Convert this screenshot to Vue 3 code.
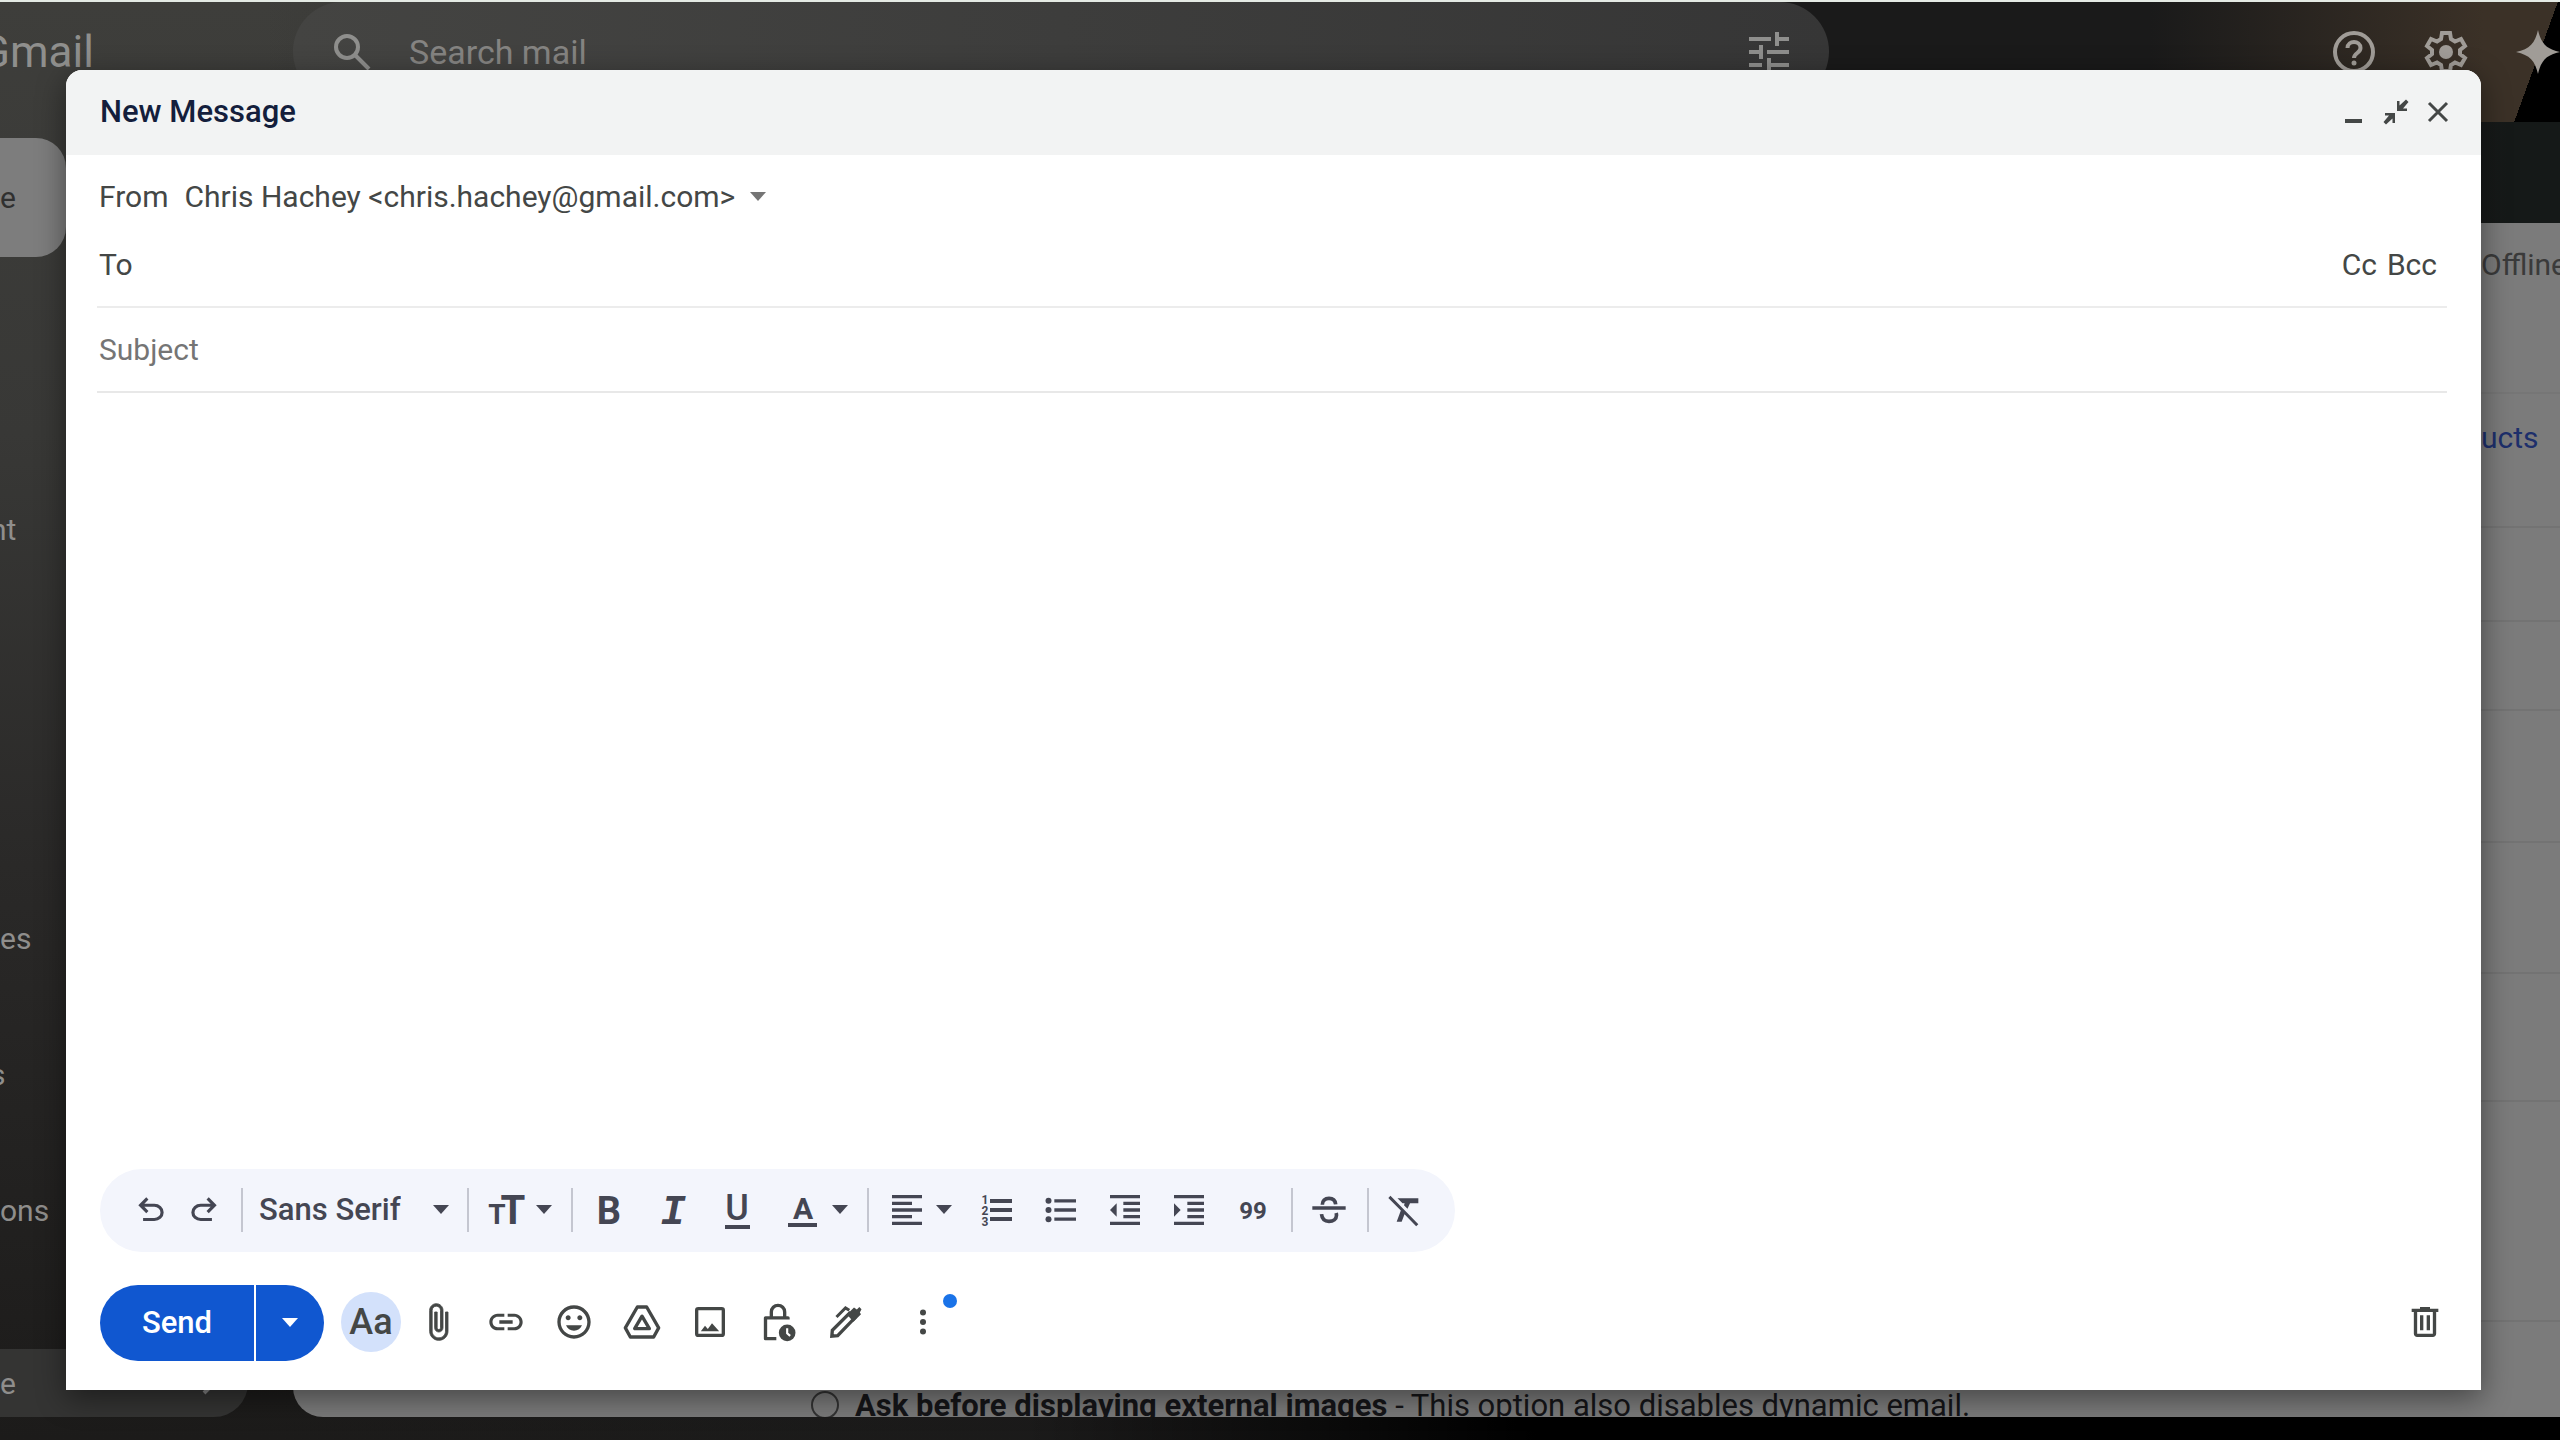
<!-- * {Script} part of code -->
<script setup>
import { ref } from 'vue'

const to = ref('')
const subject = ref('')
const body = ref('')
const from = ref('Chris Hachey <chris.hachey@gmail.com>')
const font = ref('Sans Serif')
const showFormatting = ref(true)

const folders = [
  { name: 'nt', size: 'h-first tucked' },
  { name: 'es', size: 'h-far' },
  { name: 's', size: 'h-near tucked' },
  { name: 'ons', size: 'h-near' },
]

// heights of the settings sections behind the dialog
const sections = [94, 89, 132, 131, 128, 220]

const icons = {
  undo: '<path d="M7 19v-2h7.1q1.575 0 2.738-1T18 13.5 16.838 11 14.1 10H7.8l2.6 2.6L9 14 4 9l5-5 1.4 1.4L7.8 8h6.3q2.425 0 4.163 1.575T20 13.5t-1.737 3.925T14.1 19H7z"/>',
  redo: '<path d="M9.9 19q-2.425 0-4.163-1.575T4 13.5t1.737-3.925T9.9 8h6.3l-2.6-2.6L15 4l5 5-5 5-1.4-1.4 2.6-2.6H9.9q-1.575 0-2.738 1T6 13.5 7.162 16 9.9 17H17v2H9.9z"/>',
  align: '<path d="M15 15H3v2h12v-2zm0-8H3v2h12V7zM3 13h18v-2H3v2zm0 8h18v-2H3v2zM3 3v2h18V3H3z"/>',
  outdent: '<path d="M11 17h10v-2H11v2zm-8-5l4 4V8l-4 4zm0 9h18v-2H3v2zM3 3v2h18V3H3zm8 6h10V7H11v2zm0 4h10v-2H11v2z"/>',
  indent: '<path d="M3 21h18v-2H3v2zM3 8v8l4-4-4-4zm8 9h10v-2H11v2zM3 3v2h18V3H3zm8 6h10V7H11v2zm0 4h10v-2H11v2z"/>',
  bullets: '<circle cx="4.5" cy="6.5" r="1.8"/><circle cx="4.5" cy="12" r="1.8"/><circle cx="4.5" cy="17.5" r="1.8"/><path d="M8 5.5h13v2H8zM8 11h13v2H8zM8 16.5h13v2H8z"/>',
  strike: '<path d="M2 9.8h20v2H2z"/><path d="M8 8.8C8 6.5 9.5 5 12 5s3.8 1.4 4 3.6M7.5 14.5c.3 2.9 2 4.3 4.500 4.3s4.5-1.3 4.5-3.6c0-.5-.1-1-.2-1.4" fill="none" stroke="currentColor" stroke-width="2.2"/>',
  clear: '<path d="M3.270 3.500L2 4.800l7.500 7.500L7 19h3l1.700-4.400L18.700 21.800 20 20.500 4 4.200zM7.500 5l3 3h1.300l-.4 1.200 2.100 2.100L15 8h5V5z"/>',
  attach: '<path d="M16.5 6v11.5c0 2.210-1.790 4-4 4s-4-1.790-4-4V5c0-1.380 1.120-2.500 2.500-2.500s2.500 1.120 2.500 2.500v10.500c0 .55-.45 1-1 1s-1-.45-1-1V6H10v9.500c0 1.380 1.120 2.500 2.500 2.500s2.500-1.120 2.500-2.500V5c0-2.210-1.790-4-4-4S7 2.790 7 5v12.500c0 3.040 2.460 5.500 5.500 5.500s5.500-2.460 5.500-5.500V6h-1.500z" stroke="currentColor" stroke-width=".5"/>',
  link: '<path d="M3.900 12c0-1.710 1.390-3.100 3.100-3.100h4V7H7c-2.760 0-5 2.240-5 5s2.240 5 5 5h4v-1.900H7c-1.710 0-3.100-1.390-3.100-3.100zM8 13h8v-2H8v2zm9-6h-4v1.900h4c1.710 0 3.100 1.390 3.100 3.100s-1.390 3.100-3.100 3.100h-4V17h4c2.760 0 5-2.240 5-5s-2.240-5-5-5z"/>',
  emoji: '<path d="M11.990 2C6.470 2 2 6.480 2 12s4.470 10 9.990 10C17.520 22 22 17.520 22 12S17.520 2 11.990 2zM12 20c-4.420 0-8-3.580-8-8s3.580-8 8-8 8 3.580 8 8-3.580 8-8 8zm3.500-9c.830 0 1.500-.670 1.500-1.500S16.330 8 15.500 8 14 8.670 14 9.500s.670 1.500 1.500 1.500zm-7 0c.830 0 1.500-.670 1.500-1.500S9.330 8 8.500 8 7 8.670 7 9.500 7.670 11 8.500 11zM7.200 14h9.600c-.8 2-2.600 3.200-4.800 3.200S8 16 7.200 14z"/>',
  drive: '<g fill="none" stroke="currentColor" stroke-width="2" stroke-linejoin="round"><path d="M9.200 3h5.600L22 15.500 19 21H5l-3-5.500z"/><path d="M12 8.500L7.600 16h8.800z"/></g>',
  image: '<rect x="4" y="4" width="16" height="16" rx="1" fill="none" stroke="currentColor" stroke-width="2"/><path d="M6.500 17.500l2.500-3.300 1.700 2 2.500-3.500 4.300 4.800z"/>',
  lock: '<path d="M18 10.500V9.500H4.500V22H11M8 9V6a4 4 0 0 1 8 0V9" fill="none" stroke="currentColor" stroke-width="2" stroke-linejoin="round"/><circle cx="17.500" cy="18.500" r="5"/><path d="M17.500 15.800v3l1.800 1.500" fill="none" stroke="#fff" stroke-width="1.300"/>',
  pen: '<path d="M3.500 20.500l.3-3.500L14 6.800l3 3L7 20.200z" fill="none" stroke="currentColor" stroke-width="2"/><path d="M12.500 7.500l4.300-4.200 1.700 1.200L20 3l1.300 1.300-1 2 .7 1-4.500 4.500z"/><path d="M6.300 9l5.400-5.400 2.300 1.400" fill="none" stroke="currentColor" stroke-width="1.800"/>',
  more: '<circle cx="12" cy="6.300" r="1.800"/><circle cx="12" cy="12" r="1.800"/><circle cx="12" cy="17.700" r="1.800"/>',
  trash: '<path d="M15 4V3H9v1H4v2h1.300v13c0 1.100.9 2 2 2h9.400c1.100 0 2-.9 2-2V6H20V4H15zM7.300 19V6h9.400v13H7.300z"/><path d="M9 8h2v9H9zM13 8h2v9h-2z"/>',
}

const listTools = [
  { name: 'bullets', label: 'Bulleted list' },
  { name: 'outdent', label: 'Indent less' },
  { name: 'indent', label: 'Indent more' },
]

const actions = [
  { name: 'attach', label: 'Attach files' },
  { name: 'link', label: 'Insert link' },
  { name: 'emoji', label: 'Insert emoji' },
  { name: 'drive', label: 'Insert files using Drive' },
  { name: 'image', label: 'Insert photo' },
  { name: 'lock', label: 'Toggle confidential mode' },
  { name: 'pen', label: 'Insert signature' },
]

const discard = () => {
  to.value = ''
  subject.value = ''
  body.value = ''
}
</script>

<!-- * Template {Html} part of code -->
<template>
  <div class="screen">
    <!-- mailbox behind the dialog -->
    <div class="mailbox">
      <header class="topbar">
        <span class="brand">Gmail</span>
        <div class="searchbar">
          <svg class="icon-search" viewBox="0 0 38 38"><circle cx="14" cy="14" r="11" /><path d="M22 22l14 14" /></svg>
          <span>Search mail</span>
          <svg class="icon-tune" viewBox="0 0 40 40"><path d="M0 7h22M29 7h11M28 0v14M0 20h11M18 20h22M12 13v14M0 33h13M20 33h20M20 26v14" /></svg>
        </div>
        <div class="top-icons">
          <svg viewBox="0 0 44 44"><circle cx="22" cy="22" r="19" class="line" /><path class="line" d="M15.500 18c0-8 13-8 13 0 0 5-6.500 5-6.500 10" /><circle cx="22" cy="33" r="2.500" /></svg>
          <svg viewBox="0 0 44 44"><path class="line" d="M18 3h8l1 6 4 2.500 6-2.500 4 7-5 4v4l5 4-4 7-6-2.500-4 2.500-1 6h-8l-1-6-4-2.500-6 2.500-4-7 5-4v-4l-5-4 4-7 6 2.500 4-2.500z" /><circle cx="22" cy="22" r="7" /></svg>
          <svg viewBox="0 0 44 44"><path d="M22 0c3 13 8 19 22 22-14 3-19 9-22 22-3-13-8-19-22-22C14 19 19 13 22 0z" /></svg>
        </div>
      </header>

      <div class="mail-main">
        <nav class="sidebar">
          <div class="compose-pill">e</div>
          <div v-for="folder in folders" :key="folder.name" class="folder" :class="folder.size">{{ folder.name }}</div>
          <div class="folder-active">
            <span>e</span>
            <svg viewBox="0 0 16 24"><path d="M2 2l10 10L2 22" /></svg>
          </div>
        </nav>

        <main class="settings">
          <div class="settings-panel">
            <div class="side-strip">
              <div class="tab">Offline</div>
              <div class="section-link"><a href="#">ucts</a></div>
              <div v-for="(height, i) in sections" :key="i" class="section" :style="{ height: height + 'px' }"></div>
            </div>
            <label class="option">
              <input type="radio" name="images" />
              <span><b>Ask before displaying external images</b> - This option also disables dynamic email.</span>
            </label>
          </div>
        </main>
      </div>
    </div>

    <!-- compose dialog -->
    <section class="dialog" role="dialog" aria-labelledby="dialog-title">
      <header class="dialog-header">
        <h1 id="dialog-title">New Message</h1>
        <div class="window-buttons">
          <button type="button" aria-label="Minimize"><svg viewBox="0 0 26 26"><path d="M4 20h17v4H4z" /></svg></button>
          <button type="button" aria-label="Exit full screen"><svg viewBox="0 0 26 26"><path d="M14 2v10h10v-2.500h-4L25.500 3 23 .5l-6.500 6V2zM12 24V14H2v2.500h4L.5 23 3 25.500l6.500-6V24z" /></svg></button>
          <button type="button" aria-label="Close"><svg viewBox="0 0 26 26"><path class="line" d="M4 4l18 18M22 4L4 22" /></svg></button>
        </div>
      </header>

      <form class="fields" @submit.prevent>
        <div class="row-from">
          <label for="from">From</label>
          <select id="from" v-model="from">
            <option>Chris Hachey &lt;chris.hachey@gmail.com&gt;</option>
          </select>
          <i class="arrow small"></i>
        </div>
        <div class="row-to">
          <label for="to">To</label>
          <input id="to" v-model="to" type="text" />
          <button type="button">Cc</button>
          <button type="button">Bcc</button>
        </div>
        <input v-model="subject" class="row-subject" type="text" placeholder="Subject" aria-label="Subject" />
        <textarea v-model="body" class="message" aria-label="Message body"></textarea>
      </form>

      <div v-if="showFormatting" class="toolbar">
        <button type="button" class="history" aria-label="Undo"><svg viewBox="0 0 24 24" v-html="icons.undo"></svg></button>
        <button type="button" class="history" aria-label="Redo"><svg viewBox="0 0 24 24" v-html="icons.redo"></svg></button>
        <div class="group font-group">
          <select v-model="font" aria-label="Font">
            <option>Sans Serif</option>
          </select>
          <i class="arrow"></i>
        </div>
        <div class="group">
          <button type="button" class="drop" aria-label="Size">
            <svg viewBox="0 0 40 40"><text x="10" y="34" font-size="28">T</text><text x="26" y="34" font-size="40">T</text></svg>
            <i class="arrow"></i>
          </button>
        </div>
        <div class="group">
          <button type="button" class="tool" aria-label="Bold"><svg viewBox="0 0 40 40"><text x="20" y="34" font-size="38">B</text></svg></button>
          <button type="button" class="tool" aria-label="Italic"><svg viewBox="0 0 40 40"><text class="slab" x="20" y="34" font-size="42">I</text></svg></button>
          <button type="button" class="tool" aria-label="Underline"><svg viewBox="0 0 40 40"><text class="medium" x="20" y="30" font-size="36">U</text><path d="M8 35h25v4H8z" /></svg></button>
          <button type="button" class="drop" aria-label="Text color">
            <svg viewBox="0 0 40 40"><text x="20" y="29" font-size="30">A</text><path d="M5 33h29v4H5z" /></svg>
            <i class="arrow"></i>
          </button>
        </div>
        <div class="group">
          <button type="button" class="drop" aria-label="Align">
            <svg viewBox="0 0 24 24" v-html="icons.align"></svg>
            <i class="arrow"></i>
          </button>
          <button type="button" class="tool" aria-label="Numbered list">
            <svg viewBox="0 0 40 40">
              <text x="8" y="14" font-size="12">1</text><text x="8" y="25" font-size="12">2</text><text x="8" y="36" font-size="12">3</text>
              <path d="M13 9h22v4H13zM13 18h22v4H13zM13 27h22v4H13z" />
            </svg>
          </button>
          <button v-for="tool in listTools" :key="tool.name" type="button" class="tool" :aria-label="tool.label"><svg viewBox="0 0 24 24" v-html="icons[tool.name]"></svg></button>
          <button type="button" class="tool" aria-label="Quote"><svg viewBox="0 0 40 40"><text x="20" y="29" font-size="24">99</text></svg></button>
        </div>
        <div class="group">
          <button type="button" class="tool" aria-label="Strikethrough"><svg viewBox="0 0 24 24" v-html="icons.strike"></svg></button>
        </div>
        <div class="group">
          <button type="button" class="tool" aria-label="Remove formatting"><svg viewBox="0 0 24 24" v-html="icons.clear"></svg></button>
        </div>
      </div>

      <footer class="actions">
        <div class="send">
          <button type="button" class="send-main">Send</button>
          <button type="button" class="send-more" aria-label="More send options"><i class="arrow"></i></button>
        </div>
        <button type="button" class="formatting" aria-label="Formatting options" @click="showFormatting = !showFormatting">Aa</button>
        <button v-for="action in actions" :key="action.name" type="button" class="action" :aria-label="action.label"><svg viewBox="0 0 24 24" v-html="icons[action.name]"></svg></button>
        <button type="button" class="action more" aria-label="More options"><svg viewBox="0 0 24 24" v-html="icons.more"></svg></button>
        <button type="button" class="action discard" aria-label="Discard draft" @click="discard"><svg viewBox="0 0 24 24" v-html="icons.trash"></svg></button>
      </footer>
    </section>
  </div>
</template>

<!-- * {CSS} part of code -->
<style>
body{
  margin: 0;
  background: #0c0c0c;
}
</style>

<style scoped>
*{
  box-sizing: border-box;
}

.screen{
  display: grid;
  height: 100vh;
  overflow: hidden;
  font-family: Roboto, "Open Sans", sans-serif;
  font-size: 30px;
  color: #444746;
}

button,
input,
select,
textarea{
  font: inherit;
  color: inherit;
  background: none;
  border: none;
  padding: 0;
  margin: 0;
  outline: none;
}

button{
  cursor: pointer;
}

/* Mailbox */
.mailbox{
  grid-area: 1 / 1;
  display: flex;
  flex-direction: column;
  min-width: 0;
  min-height: 0;
  overflow: hidden;
  border-top: 2px solid #e4eae4;
  background:
    linear-gradient(110deg, transparent 72%, #000 72%) top right / 120px 120px no-repeat,
    linear-gradient(90deg, transparent 84%, #3b3127 97%) top / 100% 120px no-repeat,
    linear-gradient(90deg, transparent 96%, #151918 98%) 0 120px / 100% 104px no-repeat,
    linear-gradient(90deg, transparent 40%, #000 60%) bottom / 100% 24px no-repeat,
    linear-gradient(90deg, transparent 10%, #1a1a1a 70%),
    linear-gradient(#3e3e3b, #383836 30%, #2a2928 60%, #1c1b1a);
}

.topbar{
  flex: none;
  display: flex;
  align-items: center;
  height: 101px;
  padding-bottom: 2px;
  color: #858482;
}

.brand{
  width: 313px;
  margin-left: -20px;
  font-size: 44px;
  color: #8f8f8d;
}

.searchbar{
  flex: none;
  display: flex;
  align-items: center;
  width: 60%;
  height: 99px;
  padding: 0 40px;
  border-radius: 50px;
  font-size: 34px;
  background: linear-gradient(90deg, #444442, #363636);
}

.icon-search,
.icon-tune{
  fill: none;
  stroke: #8f8f8d;
  stroke-width: 4;
}

.icon-search{
  width: 38px;
  margin-right: 38px;
}

.icon-tune{
  width: 40px;
  margin-left: auto;
}

.top-icons{
  display: flex;
  gap: 48px;
  margin-left: auto;
}

.top-icons svg{
  width: 44px;
  fill: #a09c97;
}

.top-icons .line{
  fill: none;
  stroke: #a09c97;
  stroke-width: 4;
}

.mail-main{
  flex: 1;
  display: flex;
  min-height: 0;
}

.sidebar{
  flex: none;
  display: flex;
  flex-direction: column;
  width: 293px;
  padding: 35px 45px 23px 0;
  color: #8f8e8c;
}

.compose-pill{
  display: flex;
  align-items: center;
  width: 66px;
  height: 119px;
  border-radius: 0 30px 30px 0;
  background: #7d7d7d;
  color: #303030;
}

.folder{
  display: flex;
  align-items: flex-end;
}

.tucked{
  margin-left: -10px;
}

.h-first{
  height: 290px;
}

.h-far{
  height: 409px;
}

.h-near{
  height: 136px;
}

.folder-active{
  display: flex;
  align-items: center;
  justify-content: space-between;
  height: 68px;
  margin-top: auto;
  padding-right: 30px;
  border-radius: 0 0 34px 0;
  background: #343433;
}

.folder-active svg{
  width: 16px;
  fill: none;
  stroke: #858585;
  stroke-width: 4;
}

.settings{
  flex: 1;
  min-width: 0;
  padding: 120px 0 23px;
}

.settings-panel{
  display: flex;
  flex-direction: column;
  justify-content: space-between;
  height: 100%;
  overflow: hidden;
  border-radius: 0 0 0 30px;
  background: #7b7b7b;
}

.side-strip{
  flex: 1;
  align-self: flex-end;
  width: 79px;
  min-height: 0;
  overflow: hidden;
  color: #3a3a3a;
}

.tab{
  height: 171px;
  border-bottom: 2px solid #767676;
  line-height: 84px;
}

.section-link{
  height: 134px;
  border-bottom: 2px solid #737373;
  line-height: 88px;
}

.side-strip a{
  color: #1d2f6b;
  text-decoration: none;
}

.section{
  border-bottom: 2px solid #737373;
}

.option{
  flex: none;
  display: flex;
  align-items: center;
  gap: 16px;
  height: 24px;
  padding-left: 518px;
  font-size: 31px;
  color: #151518;
}

.option input{
  appearance: none;
  width: 28px;
  height: 28px;
  border: 2px solid #333;
  border-radius: 50%;
}

/* Dialog */
.dialog{
  grid-area: 1 / 1;
  display: flex;
  flex-direction: column;
  min-width: 0;
  margin: 70px 79px 50px 66px;
  border-radius: 16px 16px 0 0;
  background: #fff;
  box-shadow: 0 8px 30px rgba(0, 0, 0, 0.45);
  z-index: 1;
}

.dialog-header{
  display: flex;
  align-items: center;
  justify-content: space-between;
  height: 85px;
  padding: 0 30px 2px 34px;
  border-radius: 16px 16px 0 0;
  background: #f2f3f3;
}

.dialog-header h1{
  margin: 0;
  font-size: 31px;
  font-weight: 500;
  color: #141e3c;
}

.window-buttons{
  display: flex;
  gap: 16px;
}

.window-buttons button,
.window-buttons svg{
  display: block;
  width: 26px;
  height: 26px;
  fill: #444746;
}

.window-buttons .line{
  stroke: #444746;
  stroke-width: 3;
}

.fields{
  flex: 1;
  display: flex;
  flex-direction: column;
  min-height: 0;
  padding: 0 34px 0 31px;
}

.row-from,
.row-to{
  display: flex;
  align-items: center;
  padding-left: 2px;
}

.row-from{
  height: 85px;
  padding-bottom: 2px;
}

.row-from label{
  margin-right: 16px;
}

select{
  appearance: none;
  cursor: pointer;
}

.row-to{
  height: 68px;
  padding-bottom: 18px;
  padding-right: 10px;
  border-bottom: 2px solid #ececec;
}

.row-to input{
  flex: 1;
  min-width: 0;
}

.row-to button{
  margin-left: 10px;
}

.row-subject{
  height: 85px;
  padding-left: 2px;
  border-bottom: 2px solid #e8e8e8;
}

.row-subject::placeholder{
  color: #757575;
  opacity: 1;
}

.message{
  flex: 1;
  min-height: 0;
  padding: 20px 2px;
  resize: none;
}

.arrow{
  width: 0;
  height: 0;
  border: 8px solid transparent;
  border-top: 9px solid currentColor;
  border-bottom: none;
}

.arrow.small{
  margin-left: 14px;
  color: #757575;
}

/* Formatting toolbar */
.toolbar{
  align-self: flex-start;
  display: flex;
  align-items: center;
  height: 83px;
  margin-left: 34px;
  padding: 0 18px 2px 24px;
  border-radius: 42px;
  background: #f3f5fc;
  color: #444653;
}

.toolbar svg{
  flex: none;
  display: block;
  width: 40px;
  height: 40px;
  fill: currentColor;
}

.toolbar text{
  font-family: Roboto, sans-serif;
  font-weight: 700;
  text-anchor: middle;
}

.toolbar .medium{
  font-weight: 500;
}

.toolbar .slab{
  font-family: "Liberation Mono", monospace;
  font-style: italic;
}

.toolbar button{
  display: flex;
  align-items: center;
  justify-content: center;
}

.history{
  width: 53px;
}

.toolbar .history svg{
  width: 38px;
  height: 38px;
}

.group{
  display: flex;
  align-items: center;
  height: 44px;
  padding-left: 4px;
  border-left: 2px solid #c4c6d0;
}

.history + .group{
  margin-left: 11px;
}

.group + .group{
  margin-left: 6px;
}

.font-group{
  width: 220px;
  justify-content: space-between;
  padding: 0 12px 0 16px;
  font-size: 31px;
  font-weight: 500;
}

.tool{
  width: 64px;
}

.drop{
  width: 92px;
  gap: 9px;
}

/* Bottom actions */
.actions{
  display: flex;
  align-items: center;
  height: 138px;
  padding: 4px 22px 0 34px;
}

.actions svg{
  display: block;
  width: 40px;
  height: 40px;
  fill: currentColor;
}

.send{
  display: flex;
  gap: 2px;
  height: 76px;
  color: #fff;
}

.send button{
  padding-bottom: 2px;
  background: #1057d0;
}

.send-main{
  width: 154px;
  border-radius: 38px 0 0 38px;
  font-size: 31px;
  font-weight: 500;
}

.send-more{
  display: flex;
  align-items: center;
  justify-content: center;
  width: 68px;
  border-radius: 0 38px 38px 0;
}

.formatting{
  width: 60px;
  height: 60px;
  margin: 0 3px 3px 17px;
  border-radius: 50%;
  background: #d3e1fb;
  font-size: 36px;
  font-weight: 500;
}

.action{
  display: flex;
  justify-content: center;
  width: 68px;
  margin-bottom: 3px;
}

.more{
  position: relative;
  margin-left: 9px;
}

.more::after{
  content: "";
  position: absolute;
  top: -8px;
  right: 0;
  width: 14px;
  height: 14px;
  border-radius: 50%;
  background: #1a73e8;
}

.discard{
  margin-left: auto;
}
</style>
